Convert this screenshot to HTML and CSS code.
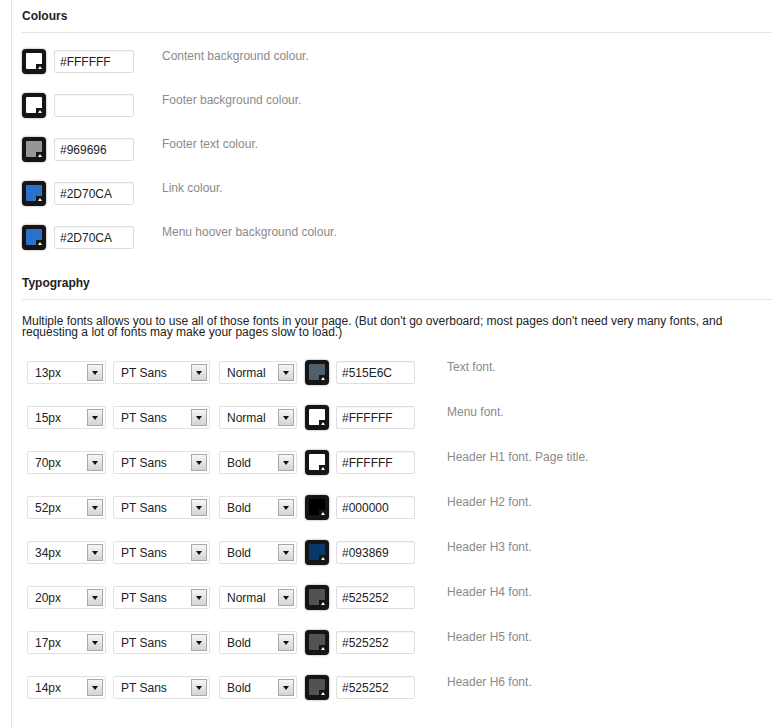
FILE: index.html
```html
<!DOCTYPE html>
<html lang="en">
  <head>
    <meta charset="UTF-8" />
    <title>Theme Options</title>
    <link rel="stylesheet" href="styles.css">
  </head>
  <body>
    <div class="panel">
      <h3 class="section-title">Colours</h3>
      <div class="colour-list">
        <div class="colour-row">
          <span class="swatch" style="--c: #FFFFFF"><span class="notch"></span></span>
          <input class="hex" type="text" value="#FFFFFF" />
          <span class="desc">Content background colour.</span>
        </div>
        <div class="colour-row">
          <span class="swatch" style="--c: #FFFFFF"><span class="notch"></span></span>
          <input class="hex" type="text" value="" />
          <span class="desc">Footer background colour.</span>
        </div>
        <div class="colour-row">
          <span class="swatch" style="--c: #969696"><span class="notch"></span></span>
          <input class="hex" type="text" value="#969696" />
          <span class="desc">Footer text colour.</span>
        </div>
        <div class="colour-row">
          <span class="swatch" style="--c: #2D70CA"><span class="notch"></span></span>
          <input class="hex" type="text" value="#2D70CA" />
          <span class="desc">Link colour.</span>
        </div>
        <div class="colour-row">
          <span class="swatch" style="--c: #2D70CA"><span class="notch"></span></span>
          <input class="hex" type="text" value="#2D70CA" />
          <span class="desc">Menu hoover background colour.</span>
        </div>
      </div>

      <h3 class="section-title">Typography</h3>
      <p class="intro">Multiple fonts allows you to use all of those fonts in your page. (But don't go overboard; most pages don't need very many fonts, and requesting a lot of fonts may make your pages slow to load.)</p>

      <div class="font-list" id="fontList"></div>
    </div>

    <script>
      const fonts = [
        ["13px", "Normal", "#515E6C", "Text font."],
        ["15px", "Normal", "#FFFFFF", "Menu font."],
        ["70px", "Bold", "#FFFFFF", "Header H1 font. Page title."],
        ["52px", "Bold", "#000000", "Header H2 font."],
        ["34px", "Bold", "#093869", "Header H3 font."],
        ["20px", "Normal", "#525252", "Header H4 font."],
        ["17px", "Bold", "#525252", "Header H5 font."],
        ["14px", "Bold", "#525252", "Header H6 font."]
      ];

      const list = document.getElementById("fontList");

      function select(cls, value) {
        return '<div class="select ' + cls + '"><span>' + value +
          '</span><span class="arrow"></span></div>';
      }

      fonts.forEach(([size, weight, colour, label]) => {
        const row = document.createElement("div");
        row.className = "font-row";
        row.innerHTML =
          select("sel-size", size) +
          select("sel-family", "PT Sans") +
          select("sel-weight", weight) +
          '<span class="swatch" style="--c: ' + colour + '"><span class="notch"></span></span>' +
          '<input class="hex" type="text" value="' + colour + '" />' +
          '<span class="desc">' + label + "</span>";
        list.appendChild(row);
      });
    </script>
  </body>
</html>
```

FILE: styles.css
```css
body {
  margin: 0;
  background: #fff;
  font-family: "Liberation Sans", Arial, sans-serif;
  font-size: 12px;
  color: #222;
}
.panel {
  margin-left: 11px;
  border-left: 1px solid #e2e2e2;
  padding-left: 10px;
  padding-top: 9px;
  min-height: 718px;
}
.section-title {
  margin: 0;
  font-size: 12px;
  line-height: 14px;
  font-weight: bold;
  color: #222;
  padding-bottom: 9px;
  border-bottom: 1px solid #e4e4e4;
}
.colour-list {
  display: flex;
  flex-direction: column;
  gap: 19px;
  padding-top: 16px;
  margin-bottom: 26px;
}
.colour-row {
  display: flex;
  align-items: flex-start;
}
.swatch {
  position: relative;
  flex: none;
  width: 24px;
  height: 25px;
  box-sizing: border-box;
  background: #151515;
  border-radius: 4px;
  box-shadow: 0 0 2px rgba(0, 0, 0, 0.5);
}
.swatch::before {
  content: "";
  position: absolute;
  left: 4px;
  top: 4px;
  width: 16px;
  height: 16px;
  background: var(--c);
  border-radius: 1px;
}
.swatch .notch {
  position: absolute;
  left: 14px;
  top: 15px;
  width: 7px;
  height: 6px;
  background: #151515;
}
.swatch .notch::after {
  content: "";
  position: absolute;
  left: 2px;
  top: 2px;
  border-left: 2px solid transparent;
  border-right: 2px solid transparent;
  border-bottom: 3px solid #fff;
}
.hex {
  width: 80px;
  height: 23px;
  box-sizing: border-box;
  margin: 1px 0 0 8px;
  padding: 0 5px;
  border: 1px solid #dedede;
  border-radius: 2px;
  font-family: inherit;
  font-size: 12px;
  color: #222;
  box-shadow: inset 0 1px 1px rgba(0, 0, 0, 0.04);
}
.desc {
  color: #8a8a8a;
  line-height: 14px;
  margin-left: 28px;
  padding-top: 0;
}
.intro {
  margin: 16px 0 22px;
  font-size: 12px;
  line-height: 11px;
  color: #222;
}
.font-list {
  display: flex;
  flex-direction: column;
  gap: 20px;
  padding-left: 5px;
}
.font-row {
  display: flex;
  align-items: flex-start;
}
.select {
  display: flex;
  align-items: center;
  justify-content: space-between;
  height: 23px;
  box-sizing: border-box;
  margin-top: 1px;
  padding: 0 2px 0 7px;
  border: 1px solid #e2e2e2;
  border-radius: 2px;
  background: #fff;
  color: #222;
}
.sel-size {
  width: 79px;
}
.sel-family {
  width: 97px;
  margin-left: 7px;
}
.sel-weight {
  width: 78px;
  margin-left: 9px;
  margin-right: 8px;
}
.arrow {
  position: relative;
  width: 16px;
  height: 17px;
  box-sizing: border-box;
  border: 1px solid #a8a8a8;
  background: linear-gradient(#f6f6f6, #d4d4d4);
}
.arrow::after {
  content: "";
  position: absolute;
  left: 4px;
  top: 6px;
  border-left: 3px solid transparent;
  border-right: 3px solid transparent;
  border-top: 4px solid #111;
}
.font-row .hex {
  margin-left: 7px;
  width: 79px;
}
.font-row .desc {
  margin-left: 32px;
}
```
